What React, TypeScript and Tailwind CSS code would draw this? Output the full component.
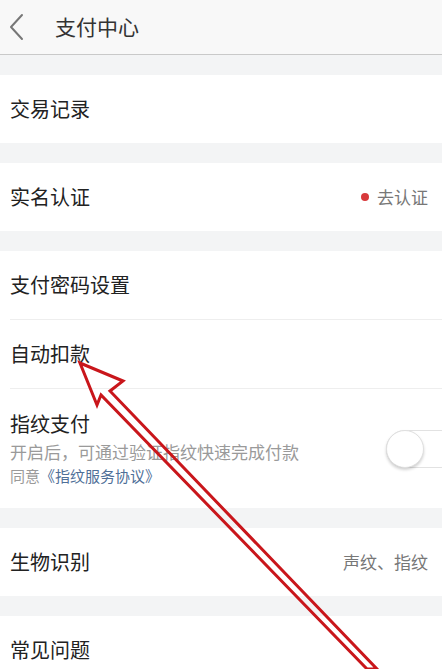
function Row({ title, right, dot }: { title: string; right?: string; dot?: boolean }) {
  return (
    <div className="flex h-[68px] items-center justify-between pr-[14px]">
      <span className="text-[20px] text-[#222]">{title}</span>
      {right && (
        <span className="flex items-center gap-[8px] text-[17px] text-[#777]">
          {dot && <span className="h-[8px] w-[8px] rounded-full bg-[#d8393b]" />}
          {right}
        </span>
      )}
    </div>
  );
}

function Gap() {
  return <div className="h-[20px] bg-[#f3f4f5]" />;
}

export default function App() {
  return (
    <div
      className="relative h-[669px] w-[442px] overflow-hidden bg-[#f3f4f5]"
      style={{ fontFamily: '"Noto Sans CJK SC", "Noto Sans", sans-serif' }}
    >
      <header className="flex h-[55px] items-center border-b border-[#c9c9c9] bg-[#f8f8f8]">
        <svg className="ml-[7px] h-[28px] w-[20px]" viewBox="0 0 20 28" fill="none">
          <path d="M15 2 L4 14 L15 26" stroke="#777" strokeWidth="2" strokeLinecap="round" strokeLinejoin="round" />
        </svg>
        <span className="ml-[28px] text-[21px] text-[#333]">支付中心</span>
      </header>

      <Gap />
      <div className="bg-white pl-[10px]">
        <Row title="交易记录" />
      </div>
      <Gap />
      <div className="bg-white pl-[10px]">
        <Row title="实名认证" right="去认证" dot />
      </div>
      <Gap />
      <div className="bg-white pl-[10px]">
        <Row title="支付密码设置" />
        <div className="h-px bg-[#eeeeee]" />
        <Row title="自动扣款" />
        <div className="h-px bg-[#eeeeee]" />
        <div className="flex h-[119px] items-center justify-between">
          <div className="flex flex-col">
            <span className="text-[20px] leading-[28px] text-[#222]">指纹支付</span>
            <span className="mt-[1px] text-[17px] leading-[25px] text-[#9a9a9a]">
              开启后，可通过验证指纹快速完成付款
            </span>
            <span className="text-[15px] leading-[24px] text-[#9a9a9a]">
              同意<span className="text-[#4f6f98]">《指纹服务协议》</span>
            </span>
          </div>
          <div className="relative mr-[-18px] h-[38px] w-[74px] shrink-0 rounded-full border border-[#e2e2e2] bg-white">
            <div className="absolute left-[-1px] top-[-1px] h-[38px] w-[38px] rounded-full border border-[#e0e0e0] bg-white shadow-[0_2px_3px_rgba(0,0,0,0.18)]" />
          </div>
        </div>
      </div>
      <Gap />
      <div className="bg-white pl-[10px]">
        <Row title="生物识别" right="声纹、指纹" />
      </div>
      <Gap />
      <div className="bg-white pl-[10px]">
        <Row title="常见问题" />
      </div>

      <svg className="pointer-events-none absolute left-0 top-0" width="442" height="669" viewBox="0 0 442 669">
        <polygon
          points="80,363 123,381 110,391 377,669 367,669 101,395 97,405"
          fill="none"
          stroke="#c9161b"
          strokeWidth="3"
          strokeLinejoin="miter"
        />
      </svg>
    </div>
  );
}
